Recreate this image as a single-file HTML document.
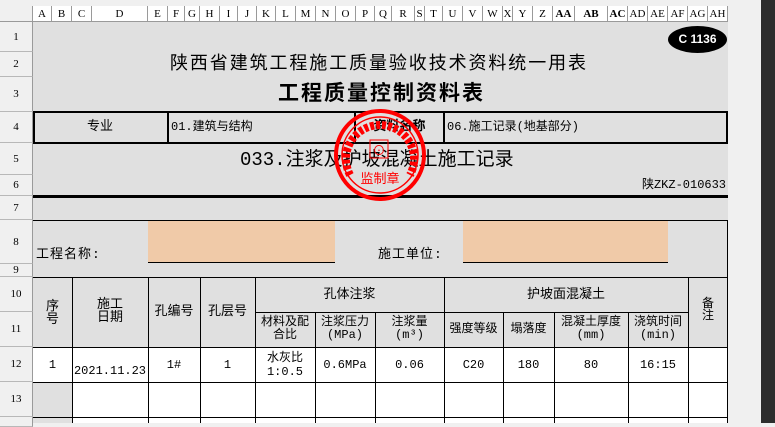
<!DOCTYPE html>
<html><head><meta charset="utf-8"><style>
*{margin:0;padding:0;box-sizing:border-box}
body{width:775px;height:423px;overflow:hidden;background:#f0f0f0;position:relative;font-family:"Liberation Mono","Noto Sans CJK SC",monospace;color:#000}
.a{position:absolute}
.ch{position:absolute;top:6px;height:16px;border-right:1px solid #9a9a9a;border-bottom:1px solid #9a9a9a;background:#fff;font-family:"Liberation Serif",serif;font-size:11px;text-align:center;line-height:16px}
.rh{position:absolute;left:0;width:33px;border-bottom:1px solid #b8b8b8;border-right:1px solid #9a9a9a;background:#f0f0f0;font-size:11px;text-align:center;font-family:"Liberation Serif",serif}
.h{position:absolute;background:#000}
.t{position:absolute;font-size:12px;text-align:center;line-height:14px;white-space:nowrap}
</style></head><body>
<div class="a" style="left:0;top:0;width:761px;height:6px;background:#f0f0f0"></div>
<div class="a" style="left:761px;top:0;width:14px;height:423px;background:#2d2d2d"></div>
<div class="a" style="left:0;top:6px;width:33px;height:16px;background:#f0f0f0;border-right:1px solid #9a9a9a;border-bottom:1px solid #9a9a9a"></div>
<div class="ch" style="left:33px;width:19px">A</div><div class="ch" style="left:52px;width:20px">B</div><div class="ch" style="left:72px;width:20px">C</div><div class="ch" style="left:92px;width:56px">D</div><div class="ch" style="left:148px;width:20px">E</div><div class="ch" style="left:168px;width:17px">F</div><div class="ch" style="left:185px;width:15px">G</div><div class="ch" style="left:200px;width:20px">H</div><div class="ch" style="left:220px;width:18px">I</div><div class="ch" style="left:238px;width:19px">J</div><div class="ch" style="left:257px;width:19px">K</div><div class="ch" style="left:276px;width:20px">L</div><div class="ch" style="left:296px;width:20px">M</div><div class="ch" style="left:316px;width:20px">N</div><div class="ch" style="left:336px;width:20px">O</div><div class="ch" style="left:356px;width:19px">P</div><div class="ch" style="left:375px;width:17px">Q</div><div class="ch" style="left:392px;width:23px">R</div><div class="ch" style="left:415px;width:10px">S</div><div class="ch" style="left:425px;width:18px">T</div><div class="ch" style="left:443px;width:20px">U</div><div class="ch" style="left:463px;width:20px">V</div><div class="ch" style="left:483px;width:20px">W</div><div class="ch" style="left:503px;width:10px">X</div><div class="ch" style="left:513px;width:20px">Y</div><div class="ch" style="left:533px;width:20px">Z</div><div class="ch" style="left:553px;width:22px;font-weight:bold">AA</div><div class="ch" style="left:575px;width:33px;font-weight:bold">AB</div><div class="ch" style="left:608px;width:20px;font-weight:bold">AC</div><div class="ch" style="left:628px;width:20px">AD</div><div class="ch" style="left:648px;width:20px">AE</div><div class="ch" style="left:668px;width:20px">AF</div><div class="ch" style="left:688px;width:20px">AG</div><div class="ch" style="left:708px;width:20px">AH</div>
<div class="rh" style="top:22px;height:30px;line-height:30px">1</div><div class="rh" style="top:52px;height:25px;line-height:25px">2</div><div class="rh" style="top:77px;height:35px;line-height:35px">3</div><div class="rh" style="top:112px;height:31px;line-height:31px">4</div><div class="rh" style="top:143px;height:32px;line-height:32px">5</div><div class="rh" style="top:175px;height:21px;line-height:21px">6</div><div class="rh" style="top:196px;height:24px;line-height:24px">7</div><div class="rh" style="top:220px;height:44px;line-height:44px">8</div><div class="rh" style="top:264px;height:13px;line-height:13px">9</div><div class="rh" style="top:277px;height:35px;line-height:35px">10</div><div class="rh" style="top:312px;height:35px;line-height:35px">11</div><div class="rh" style="top:347px;height:35px;line-height:35px">12</div><div class="rh" style="top:382px;height:35px;line-height:35px">13</div><div class="rh" style="top:417px;height:10px"></div>
<div class="a" style="left:33px;top:22px;width:695px;height:325px;background:#e0e0e0"></div>
<div class="a" style="left:33px;top:347px;width:695px;height:76px;background:#fff"></div>
<div class="a" style="left:33px;top:382px;width:39px;height:41px;background:#e0e0e0"></div>
<div class="a" style="left:668px;top:26px;width:59px;height:27px;background:#000;border-radius:50%;color:#fff;font-weight:bold;font-size:12px;text-align:center;line-height:27px;font-family:'Liberation Sans',sans-serif">C 1136</div>
<div class="t" style="left:170px;top:54px;font-size:18px;letter-spacing:1.9px;line-height:22px;text-align:left">陕西省建筑工程施工质量验收技术资料统一用表</div>
<div class="t" style="left:278px;top:84px;font-size:21px;letter-spacing:2px;font-weight:bold;line-height:24px;text-align:left">工程质量控制资料表</div>
<div class="a" style="left:33px;top:111px;width:695px;height:33px;border:2px solid #000"></div>
<div class="h" style="left:167px;top:111px;width:2px;height:33px"></div>
<div class="h" style="left:354px;top:111px;width:2px;height:33px"></div>
<div class="h" style="left:443px;top:111px;width:2px;height:33px"></div>
<div class="t" style="left:33px;top:120px;width:134px;font-size:13px">专业</div>
<div class="t" style="left:171px;top:120px;text-align:left;font-size:12px">01.建筑与结构</div>
<div class="t" style="left:356px;top:120px;width:87px;font-weight:bold;font-size:13px">资料名称</div>
<div class="t" style="left:447px;top:120px;text-align:left;font-size:12px">06.施工记录(地基部分)</div>
<div class="t" style="left:240px;top:149px;text-align:left;font-size:19px;line-height:22px">033.注浆及护坡混凝土施工记录</div>
<div class="t" style="left:600px;top:178px;width:126px;text-align:right;font-size:12px">陕ZKZ-010633</div>
<div class="h" style="left:33px;top:195px;width:695px;height:3px"></div>
<div class="h" style="left:33px;top:220px;width:695px;height:1px"></div>
<div class="a" style="left:148px;top:221px;width:187px;height:42px;background:#f0caa8;border-bottom:1px solid #000"></div>
<div class="a" style="left:463px;top:221px;width:205px;height:42px;background:#f0caa8;border-bottom:1px solid #000"></div>
<div class="t" style="left:36px;top:248px;font-size:13px;letter-spacing:1px">工程名称:</div>
<div class="t" style="left:378px;top:248px;font-size:13px;letter-spacing:1px">施工单位:</div>
<div class="h" style="left:727px;top:220px;width:1px;height:203px"></div>
<div class="h" style="left:33px;top:277px;width:695px;height:1px"></div>
<div class="h" style="left:255px;top:312px;width:433px;height:1px"></div>
<div class="h" style="left:33px;top:347px;width:695px;height:1px"></div>
<div class="h" style="left:33px;top:382px;width:695px;height:1px"></div>
<div class="h" style="left:33px;top:417px;width:695px;height:1px"></div>
<div class="h" style="left:72px;top:277px;width:1px;height:146px"></div>
<div class="h" style="left:148px;top:277px;width:1px;height:146px"></div>
<div class="h" style="left:200px;top:277px;width:1px;height:146px"></div>
<div class="h" style="left:255px;top:277px;width:1px;height:146px"></div>
<div class="h" style="left:315px;top:312px;width:1px;height:111px"></div>
<div class="h" style="left:375px;top:312px;width:1px;height:111px"></div>
<div class="h" style="left:444px;top:277px;width:1px;height:146px"></div>
<div class="h" style="left:503px;top:312px;width:1px;height:111px"></div>
<div class="h" style="left:554px;top:312px;width:1px;height:111px"></div>
<div class="h" style="left:628px;top:312px;width:1px;height:111px"></div>
<div class="h" style="left:688px;top:277px;width:1px;height:146px"></div>
<div class="t" style="left:33px;top:300px;width:39px;font-size:13px;line-height:13px">序<br>号</div>
<div class="t" style="left:72px;top:298px;width:76px;font-size:13px;line-height:13px">施工<br>日期</div>
<div class="t" style="left:148px;top:305px;width:52px;font-size:13px">孔编号</div>
<div class="t" style="left:200px;top:305px;width:55px;font-size:13px">孔层号</div>
<div class="t" style="left:255px;top:288px;width:189px;font-size:13px">孔体注浆</div>
<div class="t" style="left:444px;top:288px;width:244px;font-size:13px">护坡面混凝土</div>
<div class="t" style="left:688px;top:298px;width:40px;font-size:12px;line-height:12px">备<br>注</div>
<div class="t" style="left:255px;top:316px;width:60px;line-height:13px">材料及配<br>合比</div>
<div class="t" style="left:315px;top:316px;width:60px;line-height:13px">注浆压力<br>(MPa)</div>
<div class="t" style="left:375px;top:316px;width:69px;line-height:13px">注浆量<br>(m³)</div>
<div class="t" style="left:444px;top:322px;width:59px">强度等级</div>
<div class="t" style="left:503px;top:322px;width:51px">塌落度</div>
<div class="t" style="left:554px;top:316px;width:74px;line-height:13px">混凝土厚度<br>(mm)</div>
<div class="t" style="left:628px;top:316px;width:60px;line-height:13px">浇筑时间<br>(min)</div>
<div class="t" style="left:33px;top:358px;width:39px">1</div>
<div class="t" style="left:72px;top:364px;width:76px">2021.11.23</div>
<div class="t" style="left:148px;top:358px;width:52px">1#</div>
<div class="t" style="left:200px;top:358px;width:55px">1</div>
<div class="t" style="left:255px;top:351px;width:60px;line-height:14px">水灰比<br>1:0.5</div>
<div class="t" style="left:315px;top:358px;width:60px">0.6MPa</div>
<div class="t" style="left:375px;top:358px;width:69px">0.06</div>
<div class="t" style="left:444px;top:358px;width:59px">C20</div>
<div class="t" style="left:503px;top:358px;width:51px">180</div>
<div class="t" style="left:554px;top:358px;width:74px">80</div>
<div class="t" style="left:628px;top:358px;width:60px">16:15</div>
<svg class="a" style="left:330px;top:105px" width="100" height="100" viewBox="0 0 100 100">
<circle cx="50" cy="50" r="44" fill="none" stroke="#f00" stroke-width="4"/>
<circle cx="50" cy="50" r="38" fill="none" stroke="#f00" stroke-width="1.5"/>
<path d="M20 70 A34 34 0 1 1 80 70" fill="none" stroke="#f00" stroke-width="8" stroke-dasharray="4 2"/>
<rect x="40" y="35" width="18" height="18" fill="none" stroke="#f00" stroke-width="1"/>
<text x="49" y="50" font-size="13" fill="#f00" text-anchor="middle" font-family="Liberation Sans,Noto Sans CJK SC,sans-serif">⊙</text>
<text x="50" y="78" font-size="13" fill="#f00" text-anchor="middle" font-family="Liberation Sans,Noto Sans CJK SC,sans-serif">监制章</text>
</svg>
</body></html>
